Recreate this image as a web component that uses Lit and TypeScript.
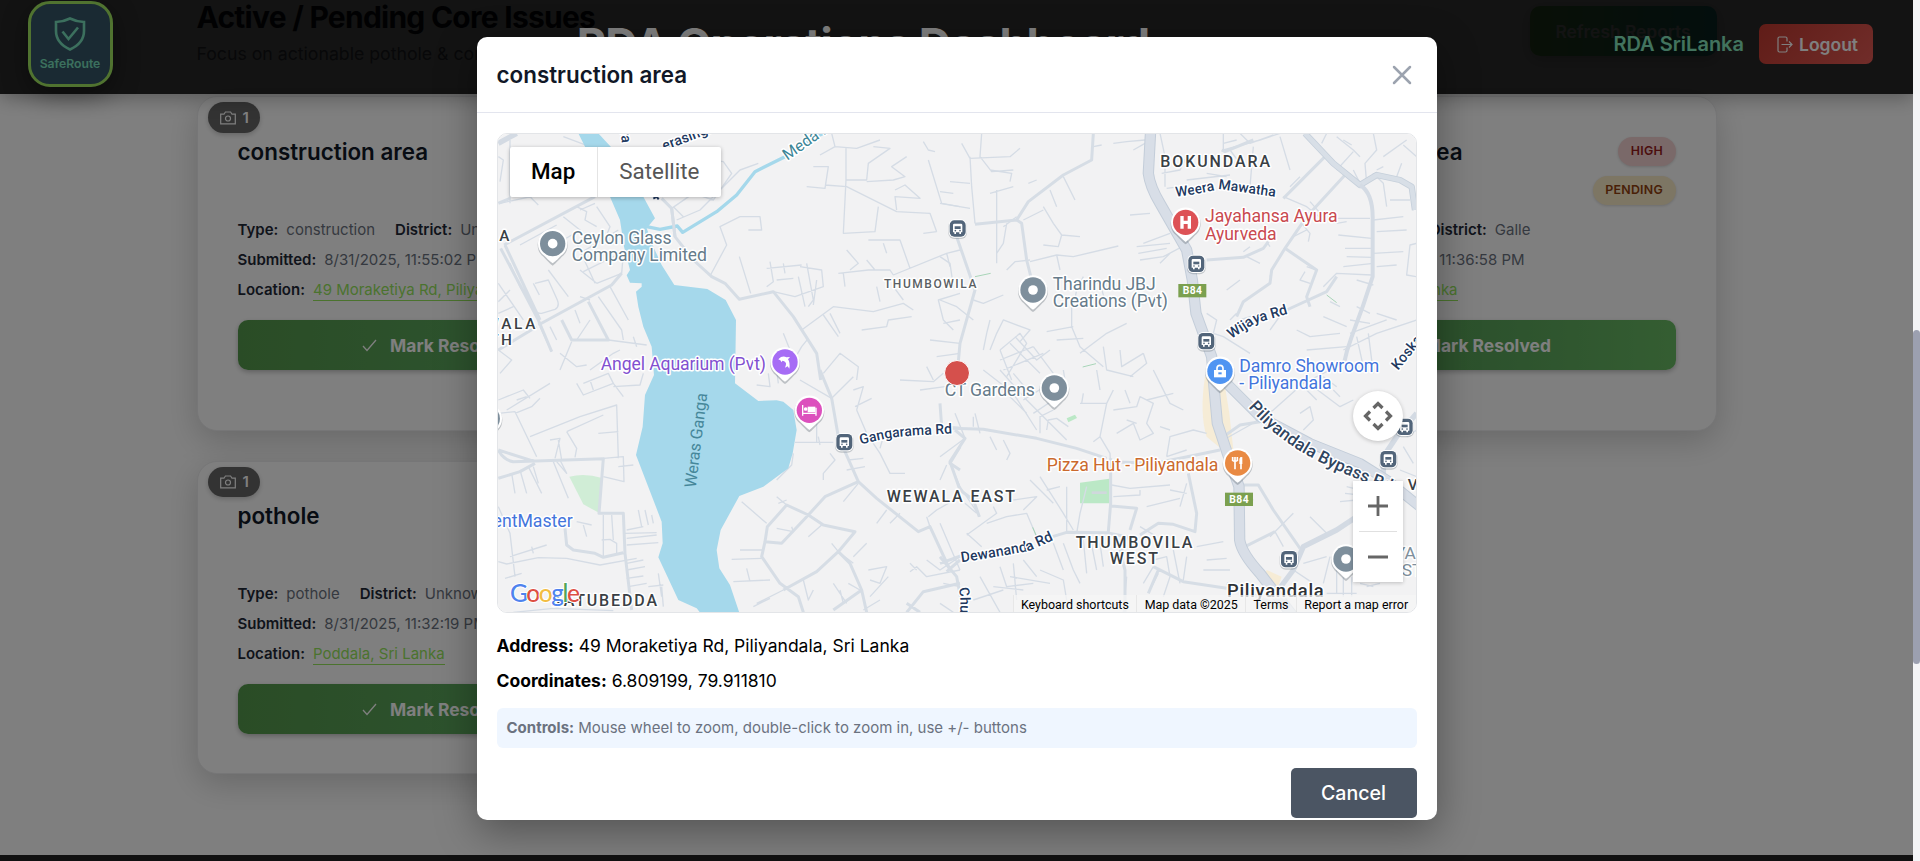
import { LitElement, html, svg, css } from 'lit';
import { customElement, property } from 'lit/decorators.js';

/* ---------- map drawing helpers (each tile group is drawn at 3x) ---------- */

const halo = '#fff';

const label = (x: number, y: number, text: string, fill: string, size = 53, weight = 400, len = 0, anchor = 'start') =>
  len
    ? svg`<text x=${x} y=${y} fill=${fill} font-size=${size} font-weight=${weight} textLength=${len} text-anchor=${anchor} stroke=${halo} stroke-width="9" stroke-linejoin="round" paint-order="stroke">${text}</text>`
    : svg`<text x=${x} y=${y} fill=${fill} font-size=${size} font-weight=${weight} text-anchor=${anchor} stroke=${halo} stroke-width="9" stroke-linejoin="round" paint-order="stroke">${text}</text>`;

const curved = (id: string, d: string, text: string, size: number, fill = '#22395f', weight = 500) => svg`
  <path id=${id} d=${d} fill="none"/>
  <text fill=${fill} font-size=${size} font-weight=${weight} stroke=${halo} stroke-width="9" stroke-linejoin="round" paint-order="stroke"><textPath href=${'#' + id}>${text}</textPath></text>`;

const dot = svg`<circle r="14.500" fill="#fff"/>`;

const pin = (x: number, y: number, color: string, glyph: unknown = dot) => svg`
  <g transform=${`translate(${x} ${y})`}>
    <path d="M0 62C-10 56-18 44-33 31A45 45 0 1 1 33 31C18 44 10 56 0 62Z" fill="#5b6670" opacity=".35" transform="translate(0 4)"/>
    <path d="M0 59C-10 53-18 42-32 30A44 44 0 1 1 32 30C18 42 10 53 0 59Z" fill="#fff"/>
    <circle r="38" fill=${color}/>
    ${glyph}
  </g>`;

const bus = (x: number, y: number) => svg`
  <g transform=${`translate(${x} ${y})`}>
    <rect x="-28" y="-25" width="56" height="56" rx="18" fill="#5b6670" opacity=".3"/>
    <rect x="-27" y="-28" width="54" height="55" rx="17" fill="#fff"/>
    <rect x="-24" y="-25" width="48" height="49" rx="14" fill="#52657a"/>
    <path d="M-14-11q0-4 4-4h20q4 0 4 4v22h-4v5h-5v-5h-10v5h-5v-5h-4z" fill="#fff"/>
    <path d="M-9-7h18v8h-18z" fill="#52657a"/>
    <circle cx="-7" cy="6" r="2.500" fill="#52657a"/><circle cx="7" cy="6" r="2.500" fill="#52657a"/>
  </g>`;

const shield = (x: number, y: number) => svg`
  <rect x=${x} y=${y} width="84" height="40" fill="#7ba04f"/>
  <text x=${x + 42} y=${y + 31} text-anchor="middle" font-size="31" font-weight="700" fill="#fff" textLength="58">B84</text>`;

const ROADS = {
  a: {
    minor:
      'M90 60V250M55 110L70 120L60 185M60 250L175 225M150 230L175 255M190 90L150 130M250 50L330 80M345 250L300 270M290 260L320 275L315 300L350 320M350 260L390 320L380 345M250 290L300 330L250 360M300 400L415 330M310 455L420 400M350 490L425 460L430 400M205 450L265 530M290 370L345 490M120 375L230 315M300 450L350 490M165 490L205 480L232 540Q240 560 225 568L185 580Q172 582 165 572L120 500L90 430M160 490L178 525M55 490L130 600M55 545L90 510M55 580L100 560M210 620L230 660M180 620L215 695M285 570L300 610M330 540L300 530M355 530L425 630L430 660M390 500L445 600M290 660L330 600M240 700L290 740L320 735M275 665L240 750M385 660L500 675M460 650L470 680M55 690L95 720L60 760M330 750L400 700L420 690M575 265L640 220L700 240L755 160L730 125L690 120M590 300L660 270L780 150L835 130M580 260L610 290M690 468L740 375L720 320L780 290L840 290L845 330L805 330M778 410L812 520M860 445L965 435M870 425L880 485L860 500M910 430L915 460M890 480L940 475M880 515L945 530L1030 500L1025 450L960 440M955 470L975 560M980 430L1000 540L985 560M1010 480L1000 555M965 630L1060 560L1180 575L1270 550L1300 570M1030 585L1075 650M1050 580L1080 640M1145 630L1220 620L1225 600L1295 590M1055 40L1065 80L1130 85L1200 60M1065 80L1020 105M1098 85V180L1090 340L1185 335L1195 260M980 200L1035 205L1045 140L1000 140M1035 195L1100 200L1250 275L1350 280L1370 335M1098 180H1160L1165 130L1230 85L1180 80M1160 185L1240 180L1275 170L1235 140L1280 110M1250 270L1245 230L1320 235L1275 195L1245 210M1330 65L1345 90L1365 95M1345 120L1385 250L1440 260M1370 335L1330 340M1165 360L1260 360L1290 445M1220 400L1210 370M1100 390L1135 430L1110 450M1075 460L1165 450L1230 450L1240 465M1090 460L1095 500M1160 420L1185 450M1240 465L1400 400L1440 390M1400 400L1410 440M1440 520L1375 540L1390 600L1420 630M1350 660L1440 670M1370 710L1440 700M1340 740L1360 780M910 640L930 690M930 740L965 680L985 655M1030 760L1080 700L1135 740L1130 780M1270 540L1240 500M1200 545L1190 500M150 110L180 160M500 550L520 600',
    mid:
      'M55 250L90 235M72 375L345 230M62 385L175 600L215 695M75 375L180 600M175 615L395 495L425 460M55 690L170 620M245 600L275 660H385L325 545M575 265L585 350L640 420L695 470L735 490L778 538L880 515L940 590L1010 700L1022 780M545 235L575 265',
    big: 'M55 70L110 40',
  },
  b: {
    minor:
      'M65 70L90 115L210 110L240 85M90 110L95 200L105 310M125 40L120 110L155 155L220 150M150 150L215 160L210 185M30 185L90 190M0 250L90 265M0 215L40 220M170 210V430M150 220L220 200M200 310L190 370L170 400M230 290L190 320M370 170L405 240M330 210L350 260M265 190L290 180M250 300L310 270M310 260L340 310L365 345L420 350M365 345L355 380L310 375M270 425L350 405L400 410L535 378M350 405L360 450M200 450L225 425L270 420M400 560L410 510L430 470M395 540V620L420 680L490 740M320 635L400 620M350 660L430 655M420 700L500 640L560 610M490 680L500 750L580 770M540 690L545 740L610 700M440 480L480 490L500 560M100 540L130 550L190 525M0 410L30 430L40 500M0 540L50 560L100 600M10 610L60 600M660 40L675 110V200M570 285L630 280M590 380L690 370M595 400L680 385M600 420L670 410L745 370M610 370L690 340M660 430L690 400M460 80L485 75M520 70L560 65L615 60M580 90L615 70M900 40L930 70L1000 45M850 40V90L960 60L1020 40M870 90L900 130M850 70L890 60M940 80L930 200M1020 50L1050 150M1080 170L1050 200M665 160L720 150L740 110M740 180L870 165M720 200L680 205M800 160L860 170M1030 230L1100 260L1150 300M1110 245L1150 290M1160 40L1145 70M1190 50L1240 90L1260 110M1210 60L1235 75M1300 40L1310 90L1275 130L1280 190M1190 150L1240 95M1310 150L1330 140M1330 110L1400 60M1390 75L1430 110M1260 190L1240 150M1310 170L1330 190L1340 260M1300 180V160M1350 240H1410M1385 130L1370 170M1190 295H1290M1190 310L1220 305M1195 345L1295 355M1215 385H1300M1220 410L1295 412M1210 440L1300 430M1300 300L1390 290M1310 335L1400 330M1300 400L1390 395M1310 440L1370 435M1430 370L1410 375L1400 465L1430 470M1150 500L1190 460L1295 465M1250 480L1300 495M1085 310L1110 340L1105 365M1060 350L1100 330M1100 440L1130 450M1095 455L1080 480L1110 490M1000 440L990 470M990 630L1040 560M1230 600L1290 610M1150 590L1220 620M1070 630L1110 650L1200 640M1100 690L1220 680M1230 640L1340 600M1210 690L1310 640L1430 600M1170 545L1200 560M1250 560L1290 580M1250 650L1270 740M1285 640L1300 760M1310 580L1370 600M800 580L830 600L820 640L850 650L930 700M890 580L870 600M900 600L960 580M920 410L960 430M990 380L970 350M910 395L930 380M860 510L900 480M180 690L240 640L260 670L200 770M150 690L170 640L190 600L270 630L240 665M180 690L215 780M130 690L140 640L150 600M210 670L300 760M180 720L280 680M190 750L310 700M280 680L340 760M225 650L290 720L330 690M570 770L620 730L610 700',
    mid:
      'M50 350L105 510L60 670L50 780M105 313L230 300L265 245L370 165L455 120L460 40M230 300L245 310L260 420L275 480M1155 110L1030 235M1215 165L1100 290L1035 385L995 450L990 490L910 545L890 590M1035 385L1130 450L1100 530L1110 560M1040 570L1160 515L1190 470M800 420L910 412L970 385L985 365M845 90L855 95L940 60',
    big: '',
    wide1: 'M1095 40L1180 130L1260 195L1310 165L1380 180L1415 200L1425 270',
    wide2: 'M1260 195Q1300 220 1298 300V470Q1270 560 1235 650Q1220 690 1212 730',
  },
  c: {
    minor:
      'M55 90L130 60L150 85M80 120L210 40M110 90L140 80M55 130L105 125L170 260M105 130L155 110L180 85M290 40L310 75L400 40L385 10L310 40M340 60L330 30M400 40L430 80M400 50L480 45L490 10M150 200L300 140L410 105L415 265M260 185L370 135M260 185L290 235L285 262M355 190L415 185M370 265L430 260L432 335L370 320M415 290L460 285M210 210L240 205L225 265M235 210L245 270M95 310L105 370M120 300L140 370M145 290L185 370M160 290L175 340M220 275L265 385M230 275L260 310L240 270M55 410L90 490L105 620M90 560L200 525M155 530L160 550M75 625L125 610M290 455L335 465M310 465L320 500M370 435V560M395 435L400 510M365 510L390 508L410 520V550M435 490L530 488M440 505L530 495M440 525L535 518M440 480L490 470M475 420L485 470M495 420L505 465M515 435L520 460M440 580L490 570M440 600L495 590M440 625L490 618M445 650L500 640M535 610L545 680M545 650L550 710M55 575L80 582L175 563L260 565L360 585L470 565M505 650L550 645M785 395L860 460M890 380L920 405L900 430M895 400L920 390M890 475L940 485L935 470M780 540L850 540M755 568L845 565M760 635L870 630M800 595L810 635M870 685L820 710M910 660L830 700M970 630L985 690L1000 660M985 500L1025 465M1055 520L1075 545L1120 580M1120 560L1160 520M830 45L870 50L865 10M895 40L890 0M945 217H1060M1010 150V215M1015 200L1020 225M1050 250L1065 270L1030 310V330M940 250L935 285L890 330M960 30L1055 85L1120 20M1125 110L1175 85M1130 120L1160 190L1200 250L1230 310L1275 310M1120 60L1150 50L1130 120M1200 235L1210 200M1105 270L1150 265M1100 300L1155 290M1090 395L1135 340M1190 460L1220 420M1230 460L1260 430M1260 30L1360 35L1390 10M1320 60L1395 50M1340 440L1350 470M1345 440L1370 420L1440 380M1290 605L1310 590L1340 620L1440 600M1165 600L1220 590L1200 640L1170 630M1170 680L1225 620M1060 640L1100 700M1080 660L1090 700M1105 640L1140 660M1290 580L1310 600M1340 570L1380 600L1440 560M1200 690L1150 720M100 727L220 715L400 722',
    mid:
      'M55 240Q70 270 100 275L370 266L357 430L430 430L435 550L455 720M55 325L120 305L165 280M165 275L55 240M255 475L260 525L280 540L345 550L370 562L430 548M1020 0L1055 85L1075 200L1135 335L1190 385L1315 485L1350 470L1410 600M1135 335L1035 380L985 435L905 520L855 515L862 470L920 405L985 435L1030 465L1125 485L1075 545L1010 605L910 660M855 515L845 560L900 640L955 680L970 727M1075 545L1110 580L1145 660L1160 727M1145 660L1060 720M1380 100L1385 170L1440 175M1440 230L1410 280L1440 300M1400 605L1440 570M1280 727L1330 665L1440 640M1280 700L1320 727',
    big: '',
  },
  d: {
    minor:
      'M0 260L75 205L45 130M30 280L60 350L120 440M20 285L0 330M100 140V170M120 190L105 130M0 460L60 600M80 490L125 530M80 495L170 430L160 410M110 430L75 400M130 0L220 70L290 180M180 0L260 90L380 210M250 90L330 40M220 10L270 70M280 130L340 90M300 190L300 140L340 120M320 180L325 150L350 145L385 170M210 80L260 130M370 0L380 60M420 100H500L520 60M430 70L425 100M470 0L480 60M500 100L480 200L510 250L512 300M480 200L460 215M520 120L590 110L600 80L640 100L620 160L640 190L600 210L580 160L530 190M555 60L570 100M560 150L590 160M620 90L700 70M640 0L690 100L730 120M680 260L690 200L760 180L800 190M680 260L740 240M690 180L660 170M150 200L170 240M190 210L210 250L200 270M300 320L370 430L400 480M270 330L340 400M380 350V490M440 350L420 430L410 490M320 360L360 350M220 390L290 380L250 420M140 460L200 440L260 430L290 500M370 520L400 600L420 640M340 520L370 600M430 510L440 610M450 500L470 600M480 520L490 590M515 345L570 355L690 345M520 380L600 375V360M620 410L720 385M740 340L720 410M690 360L740 370M600 470L650 500M640 570L680 560L690 620M700 540L720 640M770 530L850 515M800 570L860 565M790 600L870 600M730 630L740 560M560 620L550 727M180 590L200 650L280 640M220 580L230 690M160 650L250 660M250 570L290 620M120 620L180 727M300 600L370 630L380 690M100 690L190 660M10 640L60 650M0 700L40 727M210 620L330 640M640 590L610 640M655 610L630 660M690 620L670 680M1005 485L1030 530M930 370H890M940 390L890 380M990 500L1060 430M1080 535L1190 480L1250 440M1160 490L1110 440M1080 540L1060 600L1120 640M1150 640L1170 560M1190 600V670M1210 600V680M1235 620V680M1160 670H1250M1090 580L1160 560M1000 120L1090 40L1170 0M1120 50L1200 110L1240 90M1080 130L1110 110L1120 150L1090 180M1100 60L1130 90M1180 60L1200 80M1150 20L1190 50M1390 230L1420 280M1400 200L1430 180M1380 300L1430 320M1260 640L1300 650M1280 650L1320 640M1220 350L1300 370M1215 370L1260 375M1200 395L1250 390M850 210L930 165L1000 120',
    mid:
      'M35 175L130 178L290 205L410 235L500 265M512 265V400L505 485M45 180L75 205L30 275L60 360L100 390L118 440M0 580L70 555M320 505L380 487L500 488L560 500L540 545L555 600V727M515 408L590 415L570 480M600 495L655 460L700 463L765 485L770 430L745 310M510 275L640 280L720 265L840 240M560 500L540 560M640 590L730 635L860 655M860 640L1000 700M0 560L50 620L70 727M655 600L625 670M910 345L955 345L1000 420L1080 535M915 530L1005 485M850 200L900 165L960 155',
    big: 'M1015 660L1060 600L1090 530L1190 480L1250 440M1430 130L1370 200L1330 260V330',
  },
};

const OFFSETS: Record<string, string> = {
  a: 'translate(480 120) scale(.33333)',
  b: 'translate(940 120) scale(.33333)',
  c: 'translate(480 370) scale(.33333)',
  d: 'translate(940 370) scale(.33333)',
};

const roadMap = () => svg`
  <svg class="map-svg" viewBox="498 134 918 478" width="918" height="478" font-family="Roboto, sans-serif">
    <rect x="490" y="130" width="930" height="490" fill="#f2f2f3"/>
    <g transform=${OFFSETS.c}>
      <path d="M268 320Q315 308 366 324L354 427L310 403Z" fill="#d0edd6"/>
    </g>
    <g transform=${OFFSETS.d}>
      <path d="M795 20H850L868 130L880 240L860 250L800 200Q778 130 795 20Z" fill="#f6ecd6"/>
      <path d="M980 600L1025 620L1010 660L960 640Z" fill="#f6ecd6"/>
      <path d="M420 338L508 326V400H420Z" fill="#bbe8c6"/>
      <path d="M380 145L405 134L411 144L385 157Z" fill="#bbe8c6"/>
      <path d="M455 368H500" stroke="#cfd8dc" stroke-width="8"/>
    </g>
    ${(['a', 'b', 'c', 'd'] as const).map(
      (k) => svg`<g transform=${OFFSETS[k]} fill="none" stroke-linejoin="round">
        <path d=${ROADS[k].minor} stroke="#d5dce5" stroke-width="4"/>
        <path d=${ROADS[k].mid} stroke="#d6dde5" stroke-width="9"/>
        <path d=${ROADS[k].big} stroke="#d3dae3" stroke-width="16"/>
      </g>`,
    )}
    <g transform=${OFFSETS.b} fill="none" stroke-linejoin="round">
      <path d=${ROADS.b.wide1} stroke="#c6d0db" stroke-width="19"/><path d=${ROADS.b.wide1} stroke="#d8dfe7" stroke-width="14"/>
      <path d=${ROADS.b.wide2} stroke="#d4dbe4" stroke-width="12"/>
      <path d="M632 30L625 160Q630 200 660 250L740 390L757 480L768 580L815 710L822 800L832 910L862 1000L897 1100L899 1260Q905 1300 960 1360L1060 1490" stroke="#c3cdd9" stroke-width="34"/>
      <path d="M632 30L625 160Q630 200 660 250L740 390L757 480L768 580L815 710L822 800L832 910L862 1000L897 1100L899 1260Q905 1300 960 1360L1060 1490" stroke="#d8dee7" stroke-width="28"/>
      <path d="M840 770L960 890L1110 970L1260 1030L1340 1080L1440 1160" stroke="#c3cdd9" stroke-width="32"/>
      <path d="M840 770L960 890L1110 970L1260 1030L1340 1080L1440 1160" stroke="#d8dee7" stroke-width="26"/>
      <path d="M105 470L152 460M1160 525L1190 548M428 741L468 731M278 1222L290 1250" stroke="#a8d5b8" stroke-width="3"/>
    </g>
    <g transform=${OFFSETS.a}>
      <path fill="#a5d8eb" d="M295 40L330 110L390 230L420 300L432 380L450 450L440 466L450 488L485 490V500L468 515L475 560L490 620L515 680L522 765L495 825L488 920L468 1005L545 1205L548 1270L535 1312L595 1440L650 1465L670 1490H782L750 1395L718 1345L710 1290L722 1230L778 1128L850 1100L925 1045L938 1000L950 930L940 870L910 845L890 841L835 843L765 790L768 600L737 540L682 507L583 495L545 435L520 380L500 325L525 295L490 230L420 110L355 40Z"/>
      <path d="M500 320L540 328L592 318L608 337L710 275L770 225L825 155L915 110L1000 55L1050 30" fill="none" stroke="#a5d8eb" stroke-width="10" stroke-linejoin="round"/>
      <path d="M575 265L585 350" stroke="#d6dde5" stroke-width="9"/>
    </g>

    <g transform=${OFFSETS.a}>
      ${curved('meda', 'M922 122L1085 8', 'Meda Ela', 48, '#3c8596', 400)}
      ${curved('ras', 'M553 92L720 28', 'erasinghe', 43)}
      ${curved('ura', 'M418 10L428 85', 'ura', 42)}
      <path d="M520 236l10-6 6 8" fill="none" stroke="#22395f" stroke-width="6"/>
      ${label(58, 363, 'A', '#3a3f45', 46, 500)}
      ${label(16, 628, 'WALA', '#3a3f45', 46, 500, 150)}
      ${label(28, 675, 'TH', '#3a3f45', 46, 500, 68)}
      ${label(275, 371, 'Ceylon Glass', '#667b8a', 53, 400, 300)}
      ${label(275, 423, 'Company Limited', '#667b8a', 53, 400, 406)}
      ${pin(218, 371, '#7e8f9c')}
      ${label(1212, 504, 'THUMBOWILA', '#5b5f64', 36, 500, 277)}
      ${label(362, 751, 'Angel Aquarium (Pvt)', '#8250d0', 53, 400, 496)}
      ${pin(
        915,
        726,
        '#a66cf5',
        svg`<path d="M-20-8L-12-15Q-2-18 4-14L15-15L9-8Q16 2 13 20L8 13L0 17Q4 8 3 3Q-2-4-8-4L-10 1L-14-5Z" fill="#fff"/>`,
      )}
    </g>
    <g transform=${OFFSETS.b}>
      ${label(661, 140, 'BOKUNDARA', '#3a3f45', 48, 500, 329)}
      ${curved('weera', 'M708 230Q780 222 840 207Q900 216 1010 231', 'Weera Mawatha', 42)}
      ${label(795, 307, 'Jayahansa Ayura', '#c94a50', 53, 400, 398)}
      ${label(795, 359, 'Ayurveda', '#c94a50', 53, 400, 215)}
      ${pin(737, 307, '#dd5256', svg`<path d="M-16-19h10v14H6v-14h10v38H6V5H-6v14h-10z" fill="#fff"/>`)}
      ${bus(53, 326)} ${bus(769, 432)} ${bus(799, 664)}
      ${shield(715, 492)}
      ${label(338, 509, 'Tharindu JBJ', '#667b8a', 53, 400, 309)}
      ${label(338, 561, 'Creations (Pvt)', '#667b8a', 53, 400, 346)}
      ${pin(279, 510, '#7e8f9c')}
      ${curved('wijaya', 'M874 657L945 610L1040 583', 'Wijaya Rd', 43)}
      ${curved('kosk', 'M1374 752L1470 634', 'Koskan', 43)}
      ${label(898, 755, 'Damro Showroom', '#4375dc', 53, 400, 420)}
      ${label(898, 807, '- Piliyandala', '#4375dc', 53, 400, 277)}
      ${pin(
        840,
        754,
        '#4f94f2',
        svg`<path d="M-18-4h36v22h-36z" fill="#fff"/><path d="M-9-3v-6a9 9 0 0 1 18 0v6" fill="none" stroke="#fff" stroke-width="5"/><path d="M-5 6h10" stroke="#4f94f2" stroke-width="6"/>`,
      )}
    </g>
    <g transform=${OFFSETS.c}>
      <text transform="translate(647 355) rotate(-83)" font-size="49" fill="#45879a" textLength="286">Weras Ganga</text>
      ${pin(
        988,
        121,
        '#dc50bd',
        svg`<path d="M-20-16v32M-18 9h38M20-8v24" stroke="#fff" stroke-width="4"/><path d="M-5-11h23v17H-5z" fill="#fff"/><circle cx="-11" cy="-4" r="5.500" fill="#fff"/>`,
      )}
      ${pin(22, 146, '#7e8f9c')}
      ${bus(1093, 217)}
      ${curved('ganga', 'M1142 224Q1210 205 1260 200T1430 190', 'Gangarama Rd', 42)}
      ${label(1220, 396, 'WEWALA EAST', '#3a3f45', 48, 500, 385)}
      ${label(278, 471, 'DocumentMaster', '#4375dc', 53, 400, 0, 'end')}
      ${label(215, 707, 'KATUBEDDA', '#3a3f45', 48, 500, 316)}
    </g>
    <g transform=${OFFSETS.d}>
      ${label(14, 79, 'CT Gardens', '#667b8a', 53, 400, 271)}
      ${pin(343, 54, '#7e8f9c')}
      ${curved('bypass', 'M925 112Q1010 208 1120 266T1390 378', 'Piliyandala Bypass Rd', 51, '#30455f')}
      ${label(320, 303, 'Pizza Hut - Piliyandala', '#cb6a2e', 53, 400, 515)}
      ${pin(
        893,
        279,
        '#e98a43',
        svg`<path d="M-15-18v12M-8-18v12M-1-18v12M-15-6h14M-8-8V19M10-17V19" stroke="#fff" stroke-width="5" fill="none"/><path d="M5 3V-10q0-8 9-8V3z" fill="#fff"/>`,
      )}
      ${shield(855, 368)}
      ${curved('dewa', 'M64 577Q180 560 270 542L345 508', 'Dewananda Rd', 43)}
      ${label(407, 535, 'THUMBOVILA', '#3a3f45', 48, 500, 350)}
      ${label(509, 583, 'WEST', '#3a3f45', 48, 500, 145)}
      ${curved('chu2', 'M55 655Q67 690 55 760', 'Churr', 42)}
      ${bus(1047, 568)} ${bus(1345, 268)} ${bus(1394, 171)}
      ${pin(1218, 567, '#7e8f9c')}
      ${label(1403, 361, 'V', '#3a3f45', 46, 500)}
      ${label(1365, 566, 'YA', '#7e8f9c', 52)}
      ${label(1385, 617, 'ST', '#7e8f9c', 52)}
      ${label(861, 682, 'Piliyandala', '#2e3236', 55, 500, 290)}
    </g>
    <circle cx="957" cy="373" r="12.500" fill="#d5504c" stroke="#fff" stroke-width="1"/>
  </svg>`;

/* ------------------------------ report card ------------------------------ */

interface Report {
  title: string;
  type: string;
  district: string;
  submitted: string;
  location: string;
}

@customElement('report-card')
export class ReportCard extends LitElement {
  @property({ attribute: false }) report!: Report;

  static styles = css`
    :host {
      display: flex;
      flex-direction: column;
      box-sizing: border-box;
      padding: 5px 40px 39px;
      border: 1px solid #ececee;
      border-radius: 20px;
      background: #fff;
      box-shadow: 0 10px 32px rgba(0, 0, 0, 0.18);
    }
    .count {
      align-self: flex-start;
      display: flex;
      align-items: center;
      gap: 7px;
      margin-left: -30px;
      height: 31px;
      padding: 0 11px 0 12px;
      border-radius: 16px;
      background: #666;
      color: #fff;
      font-size: 15px;
      font-weight: 600;
      box-shadow: 0 2px 5px rgba(0, 0, 0, 0.2);
    }
    .top {
      display: flex;
      justify-content: space-between;
      height: 68px;
      margin: 4px 0 10px;
    }
    h3 {
      margin: 1px 0 0;
      font-size: 22.4px;
      line-height: 27px;
      font-weight: 600;
      color: #111827;
    }
    .pills {
      display: flex;
      flex-direction: column;
      align-items: flex-end;
      gap: 10px;
    }
    .pill {
      height: 29px;
      box-sizing: border-box;
      padding: 0 12.500px;
      border-radius: 15px;
      font-size: 12.400px;
      line-height: 28px;
      font-weight: 600;
      letter-spacing: 0.25px;
      box-shadow: 0 1px 3px rgba(0, 0, 0, 0.15);
    }
    .high {
      background: #f4d3d3;
      color: #991b1b;
    }
    .pending {
      background: #fbecc8;
      color: #92400e;
    }
    .row {
      display: flex;
      gap: 20px;
      font-size: 15px;
      line-height: 30px;
      color: #6b7280;
      white-space: nowrap;
    }
    .row b {
      margin-right: 8px;
      font-weight: 600;
      color: #1f2937;
    }
    .link {
      color: #96e65c;
      border-bottom: 1.5px solid #96e65c;
      line-height: 20px;
      display: inline-block;
    }
    .resolve {
      display: flex;
      align-items: center;
      justify-content: center;
      gap: 13px;
      height: 50px;
      margin-top: 15px;
      border: 0;
      border-radius: 10px;
      background: linear-gradient(90deg, #55994c, #5aa55b 55%, #69bb64);
      color: #fff;
      font: 700 17.400px Inter, sans-serif;
      box-shadow: 0 2px 5px rgba(0, 0, 0, 0.25);
    }
  `;

  render() {
    const r = this.report;
    return html`
      <div class="count">
        <svg width="16" height="14" viewBox="0 0 16 14" fill="none" stroke="#fff" stroke-width="1.200">
          <path d="M.7 3.200h3.300l1.400-2.200h5.200l1.400 2.200h3.300v9.700H.7z" /><circle cx="8" cy="7.500" r="2.500" />
        </svg>
        1
      </div>
      <div class="top">
        <h3>${r.title}</h3>
        <div class="pills"><span class="pill high">HIGH</span><span class="pill pending">PENDING</span></div>
      </div>
      <div class="row"><span><b>Type:</b>${r.type}</span><span><b>District:</b>${r.district}</span></div>
      <div class="row"><span><b>Submitted:</b>${r.submitted}</span></div>
      <div class="row"><span><b>Location:</b><span class="link">${r.location}</span></span></div>
      <button class="resolve">
        <svg width="15" height="13" viewBox="0 0 15 13" fill="none" stroke="#fff" stroke-width="1.300">
          <path d="M1 7l4 4.500L14 1" />
        </svg>
        Mark Resolved
      </button>
    `;
  }
}

/* ------------------------------ map modal ------------------------------ */

@customElement('location-modal')
export class LocationModal extends LitElement {
  static styles = css`
    :host {
      display: block;
      box-sizing: border-box;
      width: 960px;
      height: 783px;
      border-radius: 10px;
      background: #fff;
      overflow: hidden;
      box-shadow: 0 12px 40px rgba(0, 0, 0, 0.35);
      font-family: Inter, sans-serif;
      color: #000;
    }
    header {
      display: flex;
      align-items: center;
      justify-content: space-between;
      height: 75px;
      padding: 0 25px 0 20px;
      border-bottom: 1px solid #e3e5ee;
    }
    h2 {
      margin: 0;
      font-size: 22.4px;
      font-weight: 600;
      color: #111827;
    }
    .body {
      padding: 20px 20px 0;
      display: flex;
      flex-direction: column;
    }
    .map {
      position: relative;
      height: 478px;
      border: 1px solid #e3e5e8;
      border-radius: 10px;
      overflow: hidden;
      font-family: Roboto, sans-serif;
    }
    .map-svg {
      display: block;
    }
    .types {
      position: absolute;
      left: 12px;
      top: 13px;
      display: flex;
      height: 50px;
      border-radius: 2px;
      background: #fff;
      box-shadow: 0 1px 4px rgba(0, 0, 0, 0.28);
      font-size: 22.4px;
      line-height: 48px;
      color: #565656;
    }
    .types span {
      padding: 0 21.5px;
    }
    .types .on {
      color: #000;
      font-weight: 500;
      border-right: 1px solid #e4e4e4;
    }
    .google {
      position: absolute;
      left: 11px;
      bottom: 1px;
    }
    .pan {
      position: absolute;
      right: 13px;
      top: 257px;
      width: 50px;
      height: 50px;
      border-radius: 50%;
      background: #fff;
      box-shadow: 0 1px 4px rgba(0, 0, 0, 0.22);
    }
    .zoom {
      position: absolute;
      right: 13px;
      top: 347px;
      width: 50px;
      height: 101px;
      background: #fff;
      box-shadow: 0 1px 4px rgba(0, 0, 0, 0.22);
    }
    .credits {
      position: absolute;
      right: 0;
      bottom: 0;
      display: flex;
      height: 17px;
      font-size: 12.450px;
      line-height: 19px;
      background: rgba(245, 245, 245, 0.75);
    }
    .credits span {
      padding: 0 7.400px;
      border-left: 1px solid rgba(210, 210, 210, 0.4);
    }
    p {
      margin: 0;
      font-size: 17.5px;
      line-height: 35px;
    }
    p b {
      font-weight: 700;
    }
    .info {
      margin-top: 15px;
    }
    .hint {
      height: 40px;
      margin-top: 10px;
      padding: 0 10px;
      border-radius: 6px;
      background: #eff6ff;
      font-size: 15px;
      line-height: 39px;
      color: #6b7280;
    }
    .hint b {
      font-weight: 700;
    }
    .cancel {
      align-self: flex-end;
      width: 126px;
      height: 50px;
      margin-top: 20px;
      border: 0;
      border-radius: 5px;
      background: #4b5563;
      color: #fff;
      font: 500 19.600px Inter, sans-serif;
    }
  `;

  render() {
    return html`
      <header>
        <h2>construction area</h2>
        <svg width="20" height="20" viewBox="0 0 20 20" stroke="#9ca3af" stroke-width="2.500" stroke-linecap="round">
          <path d="M2 2l16 16M18 2L2 18" />
        </svg>
      </header>
      <div class="body">
        <div class="map">
          ${roadMap()}
          <div class="types"><span class="on">Map</span><span>Satellite</span></div>
          <svg class="google" width="76" height="30" viewBox="0 0 76 30">
            <text
              x="1"
              y="21"
              font-family="Lato, sans-serif"
              font-size="24.500"
              font-weight="500"
              textLength="70"
              stroke="#fff"
              stroke-width="2"
              paint-order="stroke"
            ><tspan fill="#4f83ee">G</tspan><tspan fill="#dd4f43">o</tspan><tspan fill="#f2bd42">o</tspan><tspan fill="#4f83ee">g</tspan><tspan fill="#53a558">l</tspan><tspan fill="#dd4f43">e</tspan></text>
          </svg>
          <div class="pan">
            <svg width="50" height="50" viewBox="0 0 50 50" fill="none" stroke="#666" stroke-width="3.200">
              <path d="M20.500 17l4.500-4.500L29.500 17M20.500 33l4.500 4.500L29.500 33M17 20.500L12.500 25l4.500 4.500M33 20.500l4.500 4.500-4.500 4.500" />
            </svg>
          </div>
          <div class="zoom">
            <svg width="50" height="101" viewBox="0 0 50 101" stroke="#666" stroke-width="2.800">
              <path d="M15 25h20M25 15v20M15 76h20" /><path d="M6 50.500h38" stroke="#e0e0e0" stroke-width="1" />
            </svg>
          </div>
          <div class="credits">
            <span>Keyboard shortcuts</span><span>Map data ©2025</span><span>Terms</span><span>Report a map error</span>
          </div>
        </div>
        <div class="info">
          <p><b>Address:</b> 49 Moraketiya Rd, Piliyandala, Sri Lanka</p>
          <p><b>Coordinates:</b> 6.809199, 79.911810</p>
        </div>
        <div class="hint"><b>Controls:</b> Mouse wheel to zoom, double-click to zoom in, use +/- buttons</div>
        <button class="cancel">Cancel</button>
      </div>
    `;
  }
}

/* ------------------------------ page ------------------------------ */

@customElement('app-root')
export class AppRoot extends LitElement {
  static styles = css`
    :host {
      display: block;
      font-family: Inter, sans-serif;
    }
    .app {
      display: flex;
      height: 861px;
      overflow: hidden;
    }
    .view {
      position: relative;
      flex: 1;
      height: 861px;
      overflow: hidden;
      background: #fff;
      display: flex;
      flex-direction: column;
    }
    .topbar {
      position: absolute;
      inset: 0 0 auto 0;
      z-index: 2;
      display: flex;
      align-items: center;
      justify-content: space-between;
      box-sizing: border-box;
      height: 94px;
      padding: 0 40px 6px 27.500px;
      background: rgba(0, 0, 0, 0.85);
      box-shadow: 0 4px 18px rgba(0, 0, 0, 0.3);
    }
    .logo {
      display: flex;
      flex-direction: column;
      align-items: center;
      justify-content: center;
      gap: 5px;
      box-sizing: border-box;
      width: 85px;
      height: 86px;
      border: 3px solid #a0e660;
      border-radius: 22px;
      background: #345567;
      color: #78e0bc;
      font-size: 12.200px;
      line-height: 15px;
      font-weight: 600;
      box-shadow: 0 8px 26px rgba(0, 0, 0, 0.4);
    }
    h1 {
      margin: 2px 0 0;
      font-size: 45px;
      line-height: 50px;
      font-weight: 700;
      letter-spacing: -0.024em;
      color: #fff;
    }
    .user {
      display: flex;
      align-items: center;
      gap: 15px;
      font-size: 20px;
      font-weight: 600;
      color: #85e6bd;
    }
    .logout {
      display: flex;
      align-items: center;
      gap: 6px;
      box-sizing: border-box;
      width: 114px;
      height: 40px;
      padding: 0 0 0 18px;
      border: 0;
      border-radius: 7px;
      background: linear-gradient(135deg, #c0392f, #e25a54);
      color: #fff;
      font: 600 17.500px Inter, sans-serif;
    }
    main {
      width: 1520px;
      flex: 1;
      margin: -1px auto 0;
      color: #111827;
    }
    .section {
      display: flex;
      justify-content: space-between;
      height: 97px;
    }
    .section h2 {
      margin: 0;
      font-size: 30px;
      line-height: 36px;
      font-weight: 700;
      letter-spacing: -0.025em;
    }
    .section p {
      margin: 6px 0 0;
      font-size: 17.700px;
      line-height: 26px;
      color: #6b7280;
    }
    .refresh {
      width: 187px;
      height: 50px;
      margin: 7px 0 0;
      border: 0;
      border-radius: 10px;
      background: linear-gradient(90deg, #78d060, #30b8b0);
      color: #fff;
      font: 600 17.400px Inter, sans-serif;
      box-shadow: 0 4px 14px rgba(0, 0, 0, 0.2);
    }
    .cards {
      display: grid;
      grid-template-columns: repeat(3, 1fr);
      grid-template-rows: 335px 313.500px;
      gap: 29.500px 32px;
    }
    footer {
      height: 6px;
      background: #222;
    }
    .overlay {
      position: absolute;
      inset: 0;
      z-index: 3;
      display: flex;
      align-items: flex-start;
      justify-content: center;
      padding-top: 37px;
      background: rgba(0, 0, 0, 0.5);
    }
    .scroll {
      width: 7px;
      background: #f4f4f6;
      padding-top: 330px;
      box-sizing: border-box;
    }
    .thumb {
      height: 334px;
      border-radius: 4px;
      background: #9ca0b0;
    }
  `;

  reports: Report[] = [
    { title: 'construction area', type: 'construction', district: 'Unknown', submitted: '8/31/2025, 11:55:02 PM', location: '49 Moraketiya Rd, Piliyandala, Sri Lanka' },
    { title: 'pothole', type: 'pothole', district: 'Unknown', submitted: '8/31/2025, 11:41:10 PM', location: 'Galle, Sri Lanka' },
    { title: 'construction area', type: 'construction', district: 'Galle', submitted: '8/31/2025, 11:36:58 PM', location: 'Galle, Sri Lanka' },
    { title: 'pothole', type: 'pothole', district: 'Unknown', submitted: '8/31/2025, 11:32:19 PM', location: 'Poddala, Sri Lanka' },
  ];

  render() {
    return html`
      <div class="app">
        <div class="view">
          <div class="topbar">
            <div class="logo">
              <svg width="32" height="34" viewBox="0 0 32 34" fill="none" stroke="#78e0bc" stroke-width="2.600">
                <path d="M16 1.500Q23 5 30 5V14Q30 26 16 32.500Q2 26 2 14V5Q9 5 16 1.500Z" />
                <path d="M8.500 14.500l6 7.500L24 10.500" />
              </svg>
              SafeRoute
            </div>
            <h1>RDA Operations Dashboard</h1>
            <div class="user">
              RDA SriLanka
              <button class="logout">
                <svg width="16" height="17" viewBox="0 0 16 17" fill="none" stroke="#fff" stroke-width="1.200">
                  <path d="M10 5.500V2.500Q10 1 8.500 1H2.500Q1 1 1 2.500V14.500Q1 16 2.500 16H8.500Q10 16 10 14.500V11.500M4.500 8.500H15M12 5.500l3 3-3 3" />
                </svg>
                Logout
              </button>
            </div>
          </div>
          <main>
            <div class="section">
              <div>
                <h2>Active / Pending Core Issues</h2>
                <p>Focus on actionable pothole &amp; construction reports</p>
              </div>
              <button class="refresh">Refresh Reports</button>
            </div>
            <div class="cards">${this.reports.map((r) => html`<report-card .report=${r}></report-card>`)}</div>
          </main>
          <footer></footer>
          <div class="overlay"><location-modal></location-modal></div>
        </div>
        <div class="scroll"><div class="thumb"></div></div>
      </div>
    `;
  }
}
